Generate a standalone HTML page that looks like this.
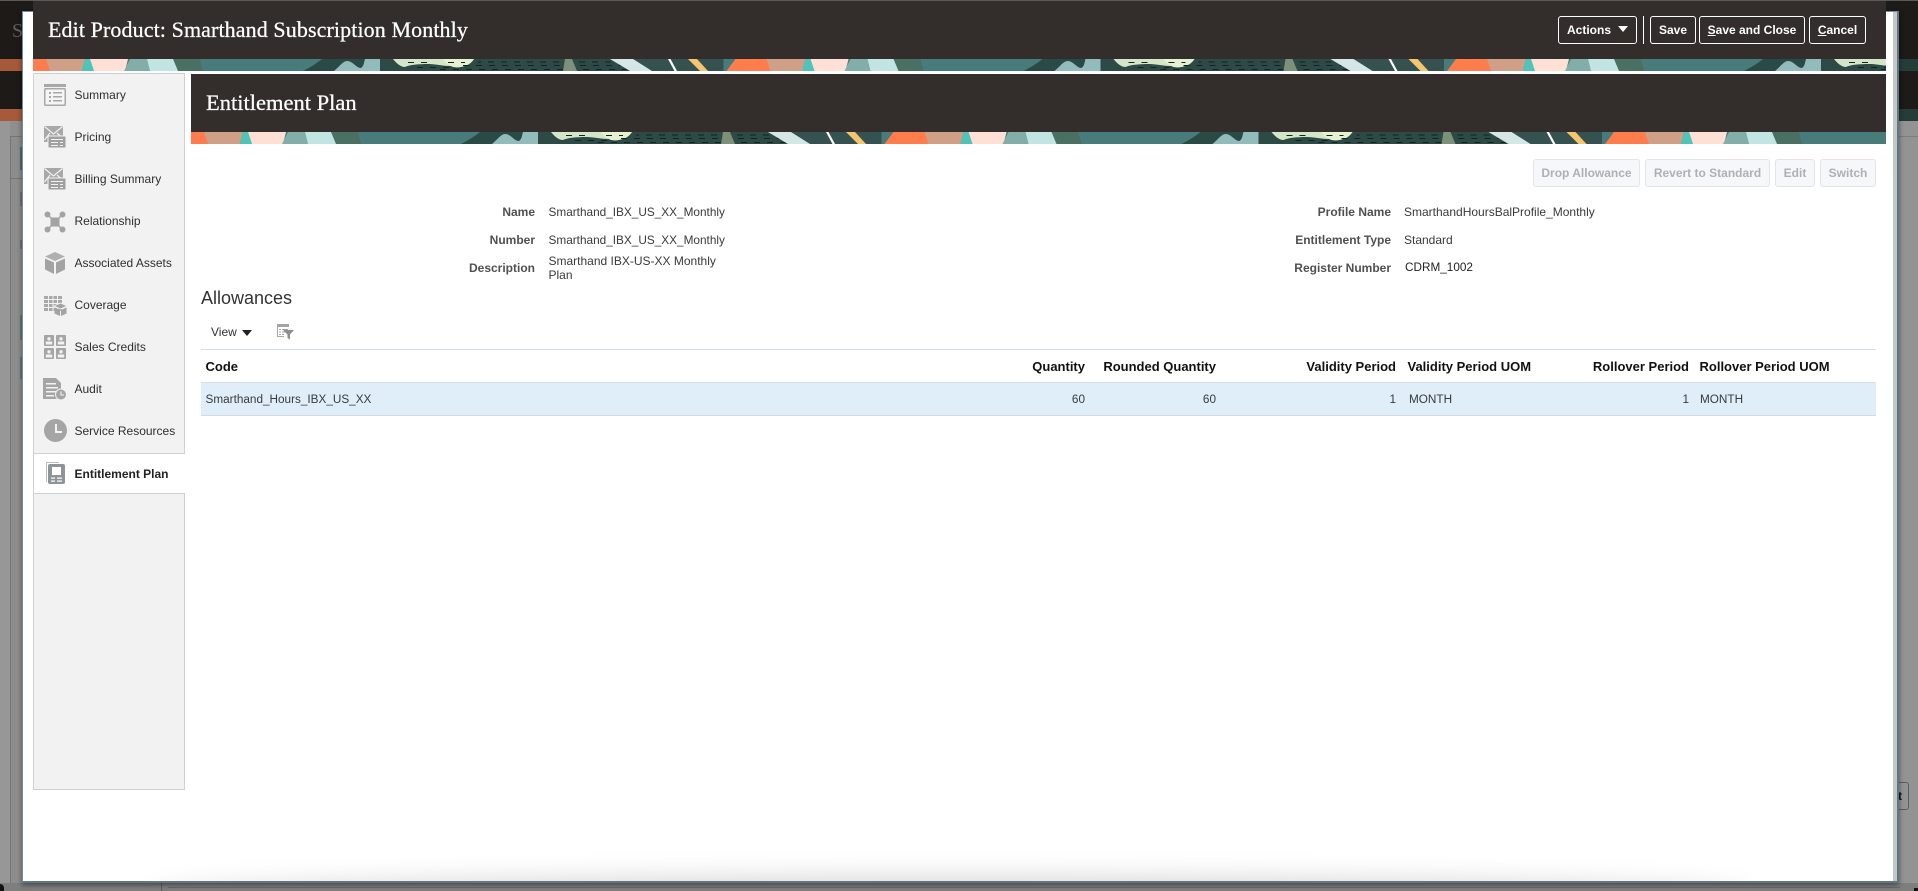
<!DOCTYPE html>
<html><head><meta charset="utf-8"><title>Edit Product</title>
<style>
*{box-sizing:border-box}
html,body{margin:0;padding:0;width:1918px;height:891px;overflow:hidden;background:#8f8f8f;font-family:"Liberation Sans",Arial,sans-serif;font-size:12px;color:#333}
.a{position:absolute}
.t{position:absolute;line-height:16px;white-space:nowrap}
.s{left:74.5px;color:#2f2f2f;font-size:12px}
.l{font-weight:bold;color:#505050;text-align:right;font-size:12px;width:200px}
.v{color:#3a3a3a;font-size:11.75px}
.h{font-weight:bold;color:#111;font-size:13px}
.r{text-align:right}
.b{position:absolute;top:16px;height:28px;border:1px solid #fff;border-radius:3px;color:#fff;font-weight:bold;font-size:12px;line-height:26px;text-align:center;white-space:nowrap}
.d{position:absolute;top:159px;height:28px;border:1px solid #e2e5e8;border-radius:3px;background:#f6f7f8;color:#adb1b5;font-weight:bold;font-size:12px;line-height:26px;text-align:center;white-space:nowrap}
.ser{font-family:"Liberation Serif",Georgia,serif;color:#fff;white-space:nowrap;position:absolute;line-height:28px;-webkit-text-stroke:.25px #fff}
svg{position:absolute;display:block}
u{text-decoration:underline}
</style></head><body>

<svg width="0" height="0" style="left:0;top:0"><defs>
<g id="tile">
<rect x="-30" y="0" width="760" height="12" fill="#487c7a"/>
<path d="M140 0H167L170 12H145Z" fill="#4a6f63"/>
<path d="M270 12C278 8 284 4 289 0H347V12Z" fill="#2a4a46"/>
<path d="M301 12C306 8 310 2 314 2C320 2 323 9 328 9C331 7 331 3 332 0H347L350 12Z" fill="#92bcbb"/>
<path d="M347 0H600L640 0V12H347Z" fill="#2e4a47"/>
<path d="M600 0H693V12H619Z" fill="#355250"/>
<path d="M360 0C364 5 368 8 372 8C376 6 384 5 396 5C402 5 410 7 418 7C424 10 434 8 441 0Z" fill="#d5e5c8"/>
<path d="M410 0H441C437 7 428 9 420 8C416 6 412 4 410 0Z" fill="#e6f2cf"/>
<g stroke="#14231f" stroke-width="1" stroke-dasharray="6 7" fill="none">
<path d="M375 3.5H400M415 3.5H432"/>
<path d="M384 8.5H420"/>
<path d="M445 3H580" stroke-dashoffset="3"/>
<path d="M430 6.5H590"/>
<path d="M400 10.500H600" stroke-dashoffset="6"/>
</g>
<path d="M532 0H539L544 12H530Z" fill="#7d9079"/>
<path d="M577 0H600L619 12H597Z" fill="#d5e6e6"/>
<path d="M635 0H637.500L644 12H641.500Z" fill="#fff"/>
<path d="M655 0H664L675 12H667Z" fill="#f5c56f"/>
<g id="wrapl">
<path d="M702 0H733L739 12H693Z" fill="#ff7c4d"/>
<path d="M733 0H772L769 12H737Z" fill="#cf9f88"/>
<path d="M772 0C775 0 776 0 777 0L781 12H769Z" fill="#4fc4bb"/>
</g>
<use href="#wrapl" x="-720"/>
<path d="M57 0H95L92 12H61Z" fill="#fee0d5"/>
<path d="M97 0H114L117 12H91Z" fill="#82ada9"/>
<path d="M114 0H140L145 12H117Z" fill="#c2e4e3"/>
</g></defs></svg>

<!-- backdrop -->
<div class="a" style="left:0;top:0;width:1918px;height:109px;background:#1d1a18"></div>
<div class="a" style="left:0;top:0;width:1918px;height:1px;background:#5a5a5a"></div>
<div class="a" style="left:0;top:59px;width:22px;height:12px;background:#a65a3a"></div>
<div class="a" style="left:0;top:109px;width:22px;height:12px;background:#a65a3a"></div>
<div class="a" style="left:1899px;top:59px;width:19px;height:12px;background:#263c39"></div>
<div class="a" style="left:1899px;top:109px;width:19px;height:12px;background:#263c39"></div>
<div class="a" style="left:0;top:121px;width:10px;height:770px;background:#979797"></div>
<div class="a" style="left:10px;top:136px;width:12px;height:755px;background:#8d8d8d;border-left:1px solid #757575;border-top:1px solid #757575"></div>
<div class="a" style="left:11px;top:178px;width:11px;height:1px;background:#757575"></div>
<div class="a" style="left:20px;top:147px;width:2px;height:23px;background:#5e686e"></div>
<div class="a" style="left:20px;top:192px;width:2px;height:14px;background:#6c7478"></div>
<div class="a" style="left:20px;top:240px;width:2px;height:9px;background:#6c7478"></div>
<div class="a" style="left:20px;top:315px;width:2px;height:25px;background:#6c7478"></div>
<div class="a" style="left:20px;top:357px;width:2px;height:22px;background:#6c7478"></div>
<div class="t" style="left:12px;top:19px;color:#5f5f5f;font-size:20px;line-height:24px;font-family:'Liberation Serif',serif">S</div>
<div class="a" style="left:0;top:883px;width:1918px;height:8px;background:#7e7e7e"></div>
<div class="a" style="left:161px;top:883px;width:1px;height:8px;background:#5e5e5e"></div>
<div class="a" style="left:168px;top:887px;width:1732px;height:1px;background:#6a6a6a"></div>
<div class="a" style="left:0;top:884px;width:4px;height:7px;background:#111;border-top-right-radius:4px"></div>
<div class="a" style="left:1914px;top:888px;width:4px;height:3px;background:#111"></div>
<div class="a" style="left:1899px;top:121px;width:19px;height:762px;background:#939393"></div>
<div class="a" style="left:1899px;top:136px;width:19px;height:1px;background:#7b7b7b"></div>
<div class="a" style="left:1890px;top:782px;width:19px;height:28px;border:1px solid #525e66;border-radius:3px;background:#939393"></div>
<div class="t" style="left:1898px;top:788px;color:#111;font-weight:bold;font-size:12px">t</div>

<!-- modal -->
<div class="a" style="left:22px;top:11px;width:1877px;height:872px;background:#fff;border:1.5px solid #6f8da3;border-right:2px solid #5d7784;border-bottom:2px solid #5d7784;box-shadow:0 2px 5px rgba(0,0,0,.45);overflow:hidden">
<div class="a" style="right:0;top:0;width:4px;height:100%;background:#c6c6c6"></div>
<div class="a" style="left:130px;right:150px;bottom:-30px;height:30px;box-shadow:0 0 26px 4px rgba(0,0,0,.16);border-radius:50%"></div>
</div>

<!-- top bar -->
<div class="a" style="left:33px;top:1px;width:1853px;height:58px;background:#332d2b"></div>
<svg style="left:33px;top:59px" width="1853" height="12" viewBox="0 0 1853 12"><use href="#tile"/><use href="#tile" x="720.500"/><use href="#tile" x="1441"/></svg>
<div class="ser" style="left:48px;top:16px;font-size:22px;letter-spacing:.1px">Edit Product: Smarthand Subscription Monthly</div>

<div class="b" style="left:1558px;width:79px;text-align:left;padding-left:8px">Actions<span class="a" style="left:59px;top:9px;width:0;height:0;border-left:5px solid transparent;border-right:5px solid transparent;border-top:6px solid #fff"></span></div>
<div class="a" style="left:1643px;top:16px;width:1px;height:28px;background:#fff"></div>
<div class="b" style="left:1650px;width:46px">Save</div>
<div class="b" style="left:1699px;width:106px"><u>S</u>ave and Close</div>
<div class="b" style="left:1809px;width:57px"><u>C</u>ancel</div>

<!-- sidebar -->
<div class="a" style="left:33px;top:73px;width:152px;height:717px;background:#f2f2f2;border:1px solid #d0d0d0"></div>
<div class="a" style="left:34px;top:453px;width:151px;height:41px;background:#fff;border-top:1px solid #d0d0d0;border-bottom:1px solid #d0d0d0"></div>
<div class="a" style="left:184px;top:454px;width:1px;height:39px;background:#fff"></div>

<div class="t s" style="top:87px">Summary</div>
<div class="t s" style="top:129px">Pricing</div>
<div class="t s" style="top:171px">Billing Summary</div>
<div class="t s" style="top:213px">Relationship</div>
<div class="t s" style="top:255px">Associated Assets</div>
<div class="t s" style="top:297px">Coverage</div>
<div class="t s" style="top:339px">Sales Credits</div>
<div class="t s" style="top:381px">Audit</div>
<div class="t s" style="top:423px">Service Resources</div>
<div class="t s" style="top:466px;font-weight:bold;color:#222">Entitlement Plan</div>

<svg style="left:44px;top:84px" width="22" height="22" viewBox="0 0 22 22"><rect width="22" height="3" fill="#a8a8a8"/><rect x=".75" y="4.750" width="20.500" height="16.500" rx="1" fill="#f5f5f5" stroke="#a8a8a8" stroke-width="1.500"/><g fill="#a8a8a8"><rect x="5" y="8" width="2" height="2"/><rect x="5" y="12" width="2" height="2"/><rect x="5" y="16" width="2" height="2"/><rect x="9" y="8" width="9" height="1.500"/><rect x="9" y="12" width="9" height="1.500"/><rect x="9" y="16" width="9" height="1.500"/></g></svg>

<svg style="left:44px;top:125px" width="22" height="23" viewBox="0 0 22 23"><path d="M0 1H19V14H5V17H0Z" fill="#a8a8a8"/><path d="M.5 1.500L9.500 9L18.500 1.500M.5 15L6 8M18.500 13L13 8" stroke="#f2f2f2" stroke-width="1.200" fill="none"/><rect x="4" y="11" width="18" height="12" rx="1" fill="#a0a0a0" stroke="#f2f2f2" stroke-width="1"/><g fill="#f2f2f2"><rect x="7" y="14" width="12" height="1"/><rect x="7" y="17" width="7" height="1"/><rect x="16" y="17" width="3" height="1"/><rect x="7" y="20" width="7" height="1"/><rect x="16" y="20" width="3" height="1"/></g></svg>

<svg style="left:44px;top:167px" width="22" height="23" viewBox="0 0 22 23"><path d="M0 1H19V14H5V17H0Z" fill="#a8a8a8"/><path d="M.5 1.500L9.500 9L18.500 1.500M.5 15L6 8M18.500 13L13 8" stroke="#f2f2f2" stroke-width="1.200" fill="none"/><rect x="4" y="11" width="18" height="12" rx="1" fill="#a0a0a0" stroke="#f2f2f2" stroke-width="1"/><g fill="#f2f2f2"><rect x="7" y="14" width="12" height="1"/><rect x="7" y="17" width="7" height="1"/><rect x="16" y="17" width="3" height="1"/><rect x="7" y="20" width="7" height="1"/><rect x="16" y="20" width="3" height="1"/></g></svg>

<svg style="left:44px;top:211px" width="22" height="22" viewBox="0 0 22 22"><path d="M4 4L18 18M18 4L4 18" stroke="#a3a3a3" stroke-width="1.500"/><rect x="6.500" y="6.500" width="9" height="9" fill="#a3a3a3"/><circle cx="3.500" cy="3.500" r="3" fill="#a3a3a3"/><circle cx="18.500" cy="3.500" r="3" fill="#a3a3a3"/><circle cx="3.500" cy="18.500" r="3" fill="#a3a3a3"/><circle cx="18.500" cy="18.500" r="3" fill="#a3a3a3"/></svg>

<svg style="left:44px;top:252px" width="22" height="22" viewBox="0 0 22 22"><path d="M11 0L21 4.500L11 9L1 4.500Z" fill="#b0b0b0"/><path d="M1 6.500L10 10.500V22L1 17.500Z" fill="#a3a3a3"/><path d="M21 6.500L12 10.500V22L21 17.500Z" fill="#a3a3a3"/></svg>

<svg style="left:44px;top:296px" width="23" height="20" viewBox="0 0 23 20"><rect width="18" height="15" fill="#a8a8a8"/><path d="M0 3.500H18M0 7.500H18M0 11.500H18M4.500 0V15M9 0V15M13.500 0V15" stroke="#f2f2f2" stroke-width="1"/><path d="M16.500 7L23 10L16.500 13L10 10Z" fill="#a3a3a3" stroke="#f2f2f2" stroke-width=".8"/><path d="M10.500 11.500L16 14V20L10.500 17.500Z M22.500 11.500L17 14V20L22.500 17.500Z" fill="#a3a3a3"/></svg>

<svg style="left:44px;top:335px" width="22" height="24" viewBox="0 0 22 24"><g id="sc"><rect width="10" height="11" rx="1" fill="#a5a5a5"/><circle cx="5" cy="3.800" r="1.700" fill="#f2f2f2"/><path d="M1.800 9.500V6.500H8.200V9.500Z" fill="#f2f2f2"/></g><use href="#sc" x="12"/><use href="#sc" y="13"/><use href="#sc" x="12" y="13"/></svg>

<svg style="left:43px;top:378px" width="24" height="22" viewBox="0 0 24 22"><path d="M0 0H13L18 5V21H0Z" fill="#a5a5a5"/><g fill="#f2f2f2"><rect x="3" y="5" width="10" height="1.500"/><rect x="3" y="9" width="12" height="1.500"/><rect x="3" y="13" width="12" height="1.500"/><rect x="3" y="17" width="8" height="1.500"/></g><circle cx="18" cy="16.500" r="5.500" fill="#a5a5a5" stroke="#f2f2f2" stroke-width="1"/><path d="M18 13.500V17H21" stroke="#f2f2f2" stroke-width="1.100" fill="none"/></svg>

<svg style="left:44px;top:419px" width="23" height="23" viewBox="0 0 23 23"><circle cx="11.500" cy="11.500" r="11.500" fill="#a5a5a5"/><path d="M12 5V13H18" stroke="#f2f2f2" stroke-width="2" fill="none"/></svg>

<svg style="left:46px;top:462px" width="20" height="23" viewBox="0 0 20 23"><path d="M13 .5H.5V20" stroke="#bbb" stroke-width="1" fill="none"/><rect x="2" y="2" width="17" height="20" rx="2" fill="#8f9499"/><rect x="6" y="5" width="9" height="8" fill="#fff"/><g fill="#fff"><rect x="5" y="15.500" width="4" height="1.200"/><rect x="11" y="15.500" width="5" height="1.200"/><rect x="5" y="18.500" width="4" height="1.200"/><rect x="11" y="18.500" width="5" height="1.200"/></g></svg>

<!-- content header -->
<div class="a" style="left:191px;top:74px;width:1695px;height:58px;background:#332d2b"></div>
<svg style="left:191px;top:132px" width="1695" height="12" viewBox="0 0 1695 12"><use href="#tile"/><use href="#tile" x="720.500"/><use href="#tile" x="1441"/></svg>
<div class="ser" style="left:206px;top:89px;font-size:22.5px">Entitlement Plan</div>

<!-- disabled buttons -->
<div class="d" style="left:1533px;width:107px">Drop Allowance</div>
<div class="d" style="left:1645px;width:125px">Revert to Standard</div>
<div class="d" style="left:1775px;width:40px">Edit</div>
<div class="d" style="left:1820px;width:56px">Switch</div>

<!-- form -->
<div class="t l" style="left:335px;top:204px">Name</div>
<div class="t l" style="left:335px;top:232px">Number</div>
<div class="t l" style="left:335px;top:260px">Description</div>
<div class="t v" style="left:548.5px;top:204px;font-size:11.8px">Smarthand_IBX_US_XX_Monthly</div>
<div class="t v" style="left:548.5px;top:232px;font-size:11.8px">Smarthand_IBX_US_XX_Monthly</div>
<div class="t v" style="left:548.5px;top:253px;font-size:12px">Smarthand IBX-US-XX Monthly</div>
<div class="t v" style="left:548.5px;top:267px;font-size:12px">Plan</div>

<div class="t l" style="left:1191px;top:204px">Profile Name</div>
<div class="t l" style="left:1191px;top:232px">Entitlement Type</div>
<div class="t l" style="left:1191px;top:260px">Register Number</div>
<div class="t v" style="left:1404px;top:204px;font-size:12px">SmarthandHoursBalProfile_Monthly</div>
<div class="t v" style="left:1404px;top:232px;font-size:12px">Standard</div>
<div class="t v" style="left:1405px;top:260px;color:#222">CDRM_1002</div>

<div class="t" style="left:201px;top:288px;font-size:18px;line-height:20px;color:#333">Allowances</div>

<!-- toolbar -->
<div class="t" style="left:211px;top:324px;color:#333;font-size:12px">View</div>
<div class="a" style="left:242px;top:330px;width:0;height:0;border-left:5px solid transparent;border-right:5px solid transparent;border-top:6px solid #222"></div>
<svg style="left:277px;top:324px" width="17" height="16" viewBox="0 0 17 16"><path d="M0 0H12V3H0Z" fill="#a5a5a5"/><path d="M.5 3V12.500H7" stroke="#a5a5a5" fill="none"/><g fill="#a5a5a5"><rect x="2" y="5" width="2" height="1"/><rect x="5" y="5" width="6" height="1"/><rect x="2" y="7.500" width="2" height="1"/><rect x="5" y="7.500" width="3" height="1"/><rect x="2" y="10" width="2" height="1"/><rect x="5" y="10" width="2" height="1"/></g><path d="M6 6H17L13 10.500V15.500L10.500 14V10.500Z" fill="#8e8e8e"/></svg>

<!-- table -->
<div class="a" style="left:201px;top:349px;width:1675px;height:1px;background:#d5dde5"></div>
<div class="a" style="left:201px;top:382px;width:1675px;height:34px;background:#e0eef9;border-top:1px solid #d5dde5;border-bottom:1px solid #d5d9dd"></div>

<div class="t h" style="left:205.500px;top:359px">Code</div>
<div class="t h r" style="right:833px;top:359px">Quantity</div>
<div class="t h r" style="right:702px;top:359px">Rounded Quantity</div>
<div class="t h r" style="right:522px;top:359px">Validity Period</div>
<div class="t h" style="left:1407.500px;top:359px">Validity Period UOM</div>
<div class="t h r" style="right:229px;top:359px">Rollover Period</div>
<div class="t h" style="left:1699.500px;top:359px">Rollover Period UOM</div>

<div class="t v" style="left:205.500px;top:392px">Smarthand_Hours_IBX_US_XX</div>
<div class="t v r" style="right:833px;top:392px">60</div>
<div class="t v r" style="right:702px;top:392px">60</div>
<div class="t v r" style="right:522px;top:392px">1</div>
<div class="t v" style="left:1409px;top:392px">MONTH</div>
<div class="t v r" style="right:229px;top:392px">1</div>
<div class="t v" style="left:1700px;top:392px">MONTH</div>

</body></html>
